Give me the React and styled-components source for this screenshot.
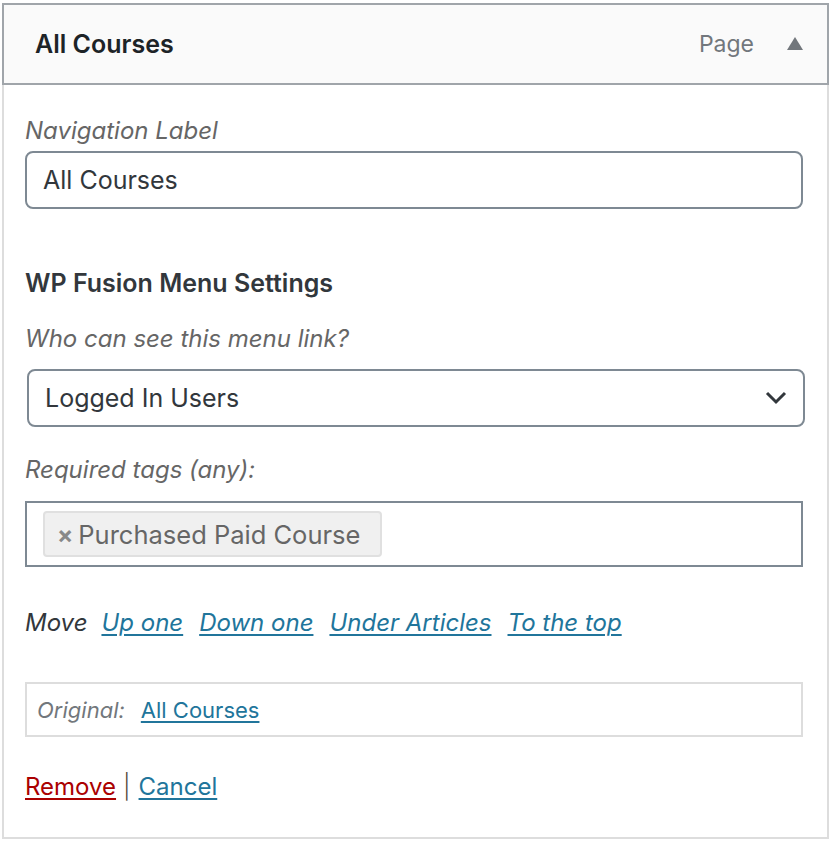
import React from 'react';
import styled, { createGlobalStyle } from 'styled-components';

const GlobalStyle = createGlobalStyle`
    body {
        margin: 0;
        background: #fff;
        font-family: Inter, "Liberation Sans", Arial, sans-serif;
        color: #23282d;
    }
`

const Panel = styled.div`
    width: 827px;
    margin: 3px 0 0 2px;
    box-sizing: border-box;
`

const Header = styled.div`
    display: flex;
    align-items: center;
    height: 82px;
    box-sizing: border-box;
    padding: 0 24px 0 31px;
    background: #fafafa;
    border: 2px solid #a0a5aa;
`

const Title = styled.h3`
    flex: 1;
    margin: 0;
    font-size: 25px;
    font-weight: 600;
    color: #1d2327;
`

const ItemType = styled.span`
    font-size: 23px;
    color: #72777c;
    margin-right: 33px;
`

const Toggle = styled.svg`
    width: 16px;
    height: 13px;
    margin-top: -2px;
`

const Body = styled.div`
    display: flex;
    flex-direction: column;
    padding: 28px 24px 32px 21px;
    border: 2px solid #ddd;
    border-top: none;
`

const Label = styled.div`
    font-size: 24px;
    line-height: 36px;
    font-style: italic;
    color: #666;
    margin-top: ${props => props.gap || 0}px;
`

const Heading = styled.div`
    font-size: 25px;
    line-height: 36px;
    font-weight: 600;
    color: #32373c;
    margin-top: ${props => props.gap || 0}px;
`

const TextInput = styled.div`
    display: flex;
    align-items: center;
    height: 58px;
    box-sizing: border-box;
    margin-top: ${props => props.gap || 0}px;
    padding: 0 16px;
    border: 2px solid #7e8993;
    border-radius: 8px;
    font-size: 25px;
    color: #32373c;
`

const Select = styled(TextInput)`
    justify-content: space-between;
    margin-left: 2px;
    margin-right: -2px;
    padding-right: 16px;
`

const Chevron = styled.svg`
    width: 22px;
    height: 14px;
`

const TagBox = styled.div`
    display: flex;
    align-items: center;
    height: 66px;
    box-sizing: border-box;
    margin-top: ${props => props.gap || 0}px;
    padding: 0 16px;
    border: 2px solid #7e8993;
`

const Tag = styled.span`
    display: inline-flex;
    align-items: center;
    height: 46px;
    box-sizing: border-box;
    padding: 0 20px 0 12px;
    background: #f0f0f0;
    border: 2px solid #e0e0e0;
    border-radius: 4px;
    font-size: 25.5px;
    color: #666;
`

const TagRemove = styled.span`
    font-weight: 700;
    color: #888;
    margin-right: 5px;
    font-size: 24px;
`

const MoveRow = styled.div`
    display: flex;
    gap: 16px;
    font-size: 24px;
    line-height: 36px;
    font-style: italic;
    margin-top: ${props => props.gap || 0}px;
`

const MoveLabel = styled.span`
    color: #32373c;
    margin-right: -2px;
`

const Link = styled.a`
    color: ${props => props.danger ? '#a00' : '#21759b'};
    text-decoration: underline;
    text-underline-offset: 3px;
    text-decoration-thickness: 2px;
    cursor: pointer;
`

const OriginalBox = styled.div`
    display: flex;
    align-items: center;
    gap: 16px;
    height: 55px;
    box-sizing: border-box;
    margin-top: ${props => props.gap || 0}px;
    padding: 0 10px;
    border: 2px solid #ddd;
    font-size: 22px;
`

const OriginalLabel = styled.span`
    font-style: italic;
    color: #72777c;
`

const Actions = styled.div`
    font-size: 24px;
    line-height: 36px;
    color: #555;
    margin-top: ${props => props.gap || 0}px;
`

const Sep = styled.span`
    margin: 0 8px 0 7px;
    color: #5a4a40;
    font-weight: 300;
`

export default function App() {
    return (
        <>
            <GlobalStyle />
            <Panel>
                <Header>
                    <Title>All Courses</Title>
                    <ItemType>Page</ItemType>
                    <Toggle viewBox="0 0 16 13">
                        <polygon points="8,0 16,13 0,13" fill="#72777c" />
                    </Toggle>
                </Header>
                <Body>
                    <Label>Navigation Label</Label>
                    <TextInput gap={2}>All Courses</TextInput>

                    <Heading gap={56}>WP Fusion Menu Settings</Heading>
                    <Label gap={20}>Who can see this menu link?</Label>
                    <Select gap={12}>
                        Logged In Users
                        <Chevron viewBox="0 0 22 14">
                            <polyline points="2,2 11,11 20,2" fill="none" stroke="#32373c" strokeWidth="3" />
                        </Chevron>
                    </Select>

                    <Label gap={25}>Required tags (any):</Label>
                    <TagBox gap={13}>
                        <Tag><TagRemove>×</TagRemove>Purchased Paid Course</Tag>
                    </TagBox>

                    <MoveRow gap={38}>
                        <MoveLabel>Move</MoveLabel>
                        <Link>Up one</Link>
                        <Link>Down one</Link>
                        <Link>Under Articles</Link>
                        <Link>To the top</Link>
                    </MoveRow>

                    <OriginalBox gap={41}>
                        <OriginalLabel>Original:</OriginalLabel>
                        <Link>All Courses</Link>
                    </OriginalBox>

                    <Actions gap={32}>
                        <Link danger>Remove</Link>
                        <Sep>|</Sep>
                        <Link>Cancel</Link>
                    </Actions>
                </Body>
            </Panel>
        </>
    )
}
